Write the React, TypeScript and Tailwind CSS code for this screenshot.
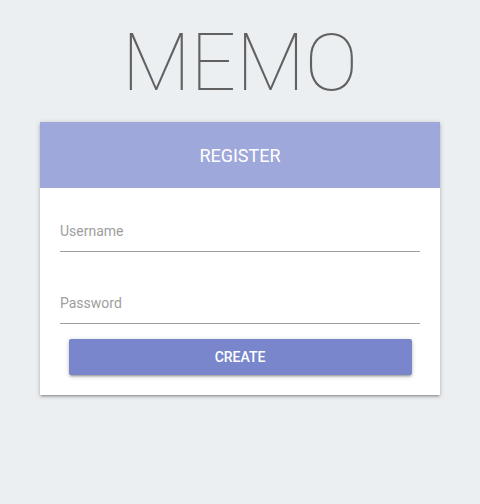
import { useState } from "react";

export default function App() {
  const [username, setUsername] = useState("");
  const [password, setPassword] = useState("");

  return (
    <div className="min-h-[504px] w-full bg-[#eceff1] font-['Roboto',sans-serif]">
      <div className="flex flex-col items-center pt-[23px]">
        <h1 className="text-[80px] font-thin leading-[80px] text-[#616161]">MEMO</h1>

        <div className="mt-[19px] w-[400px] bg-white shadow-[0_2px_2px_0_rgba(0,0,0,0.14),0_3px_1px_-2px_rgba(0,0,0,0.12),0_1px_5px_0_rgba(0,0,0,0.2)]">
          <div className="flex h-[66px] items-center justify-center bg-[#9fa8da] text-[18px] text-white">
            REGISTER
          </div>

          <div className="flex flex-col px-5 pt-[16px] pb-5">
            <input
              type="text"
              placeholder="Username"
              value={username}
              onChange={(e) => setUsername(e.target.value)}
              className="h-12 w-full border-b border-[#9e9e9e] bg-transparent pt-[6px] text-[14px] text-[#424242] outline-none placeholder:text-[#9e9e9e]"
            />
            <input
              type="password"
              placeholder="Password"
              value={password}
              onChange={(e) => setPassword(e.target.value)}
              className="mt-[24px] h-12 w-full border-b border-[#9e9e9e] bg-transparent pt-[6px] text-[14px] text-[#424242] outline-none placeholder:text-[#9e9e9e]"
            />
            <button
              type="button"
              className="mx-auto mt-[15px] h-9 w-[343px] rounded-[2px] bg-[#7986cb] text-[14px] font-medium text-white shadow-[0_2px_2px_0_rgba(0,0,0,0.14),0_3px_1px_-2px_rgba(0,0,0,0.12),0_1px_5px_0_rgba(0,0,0,0.2)]"
            >
              CREATE
            </button>
          </div>
        </div>
      </div>
    </div>
  );
}
